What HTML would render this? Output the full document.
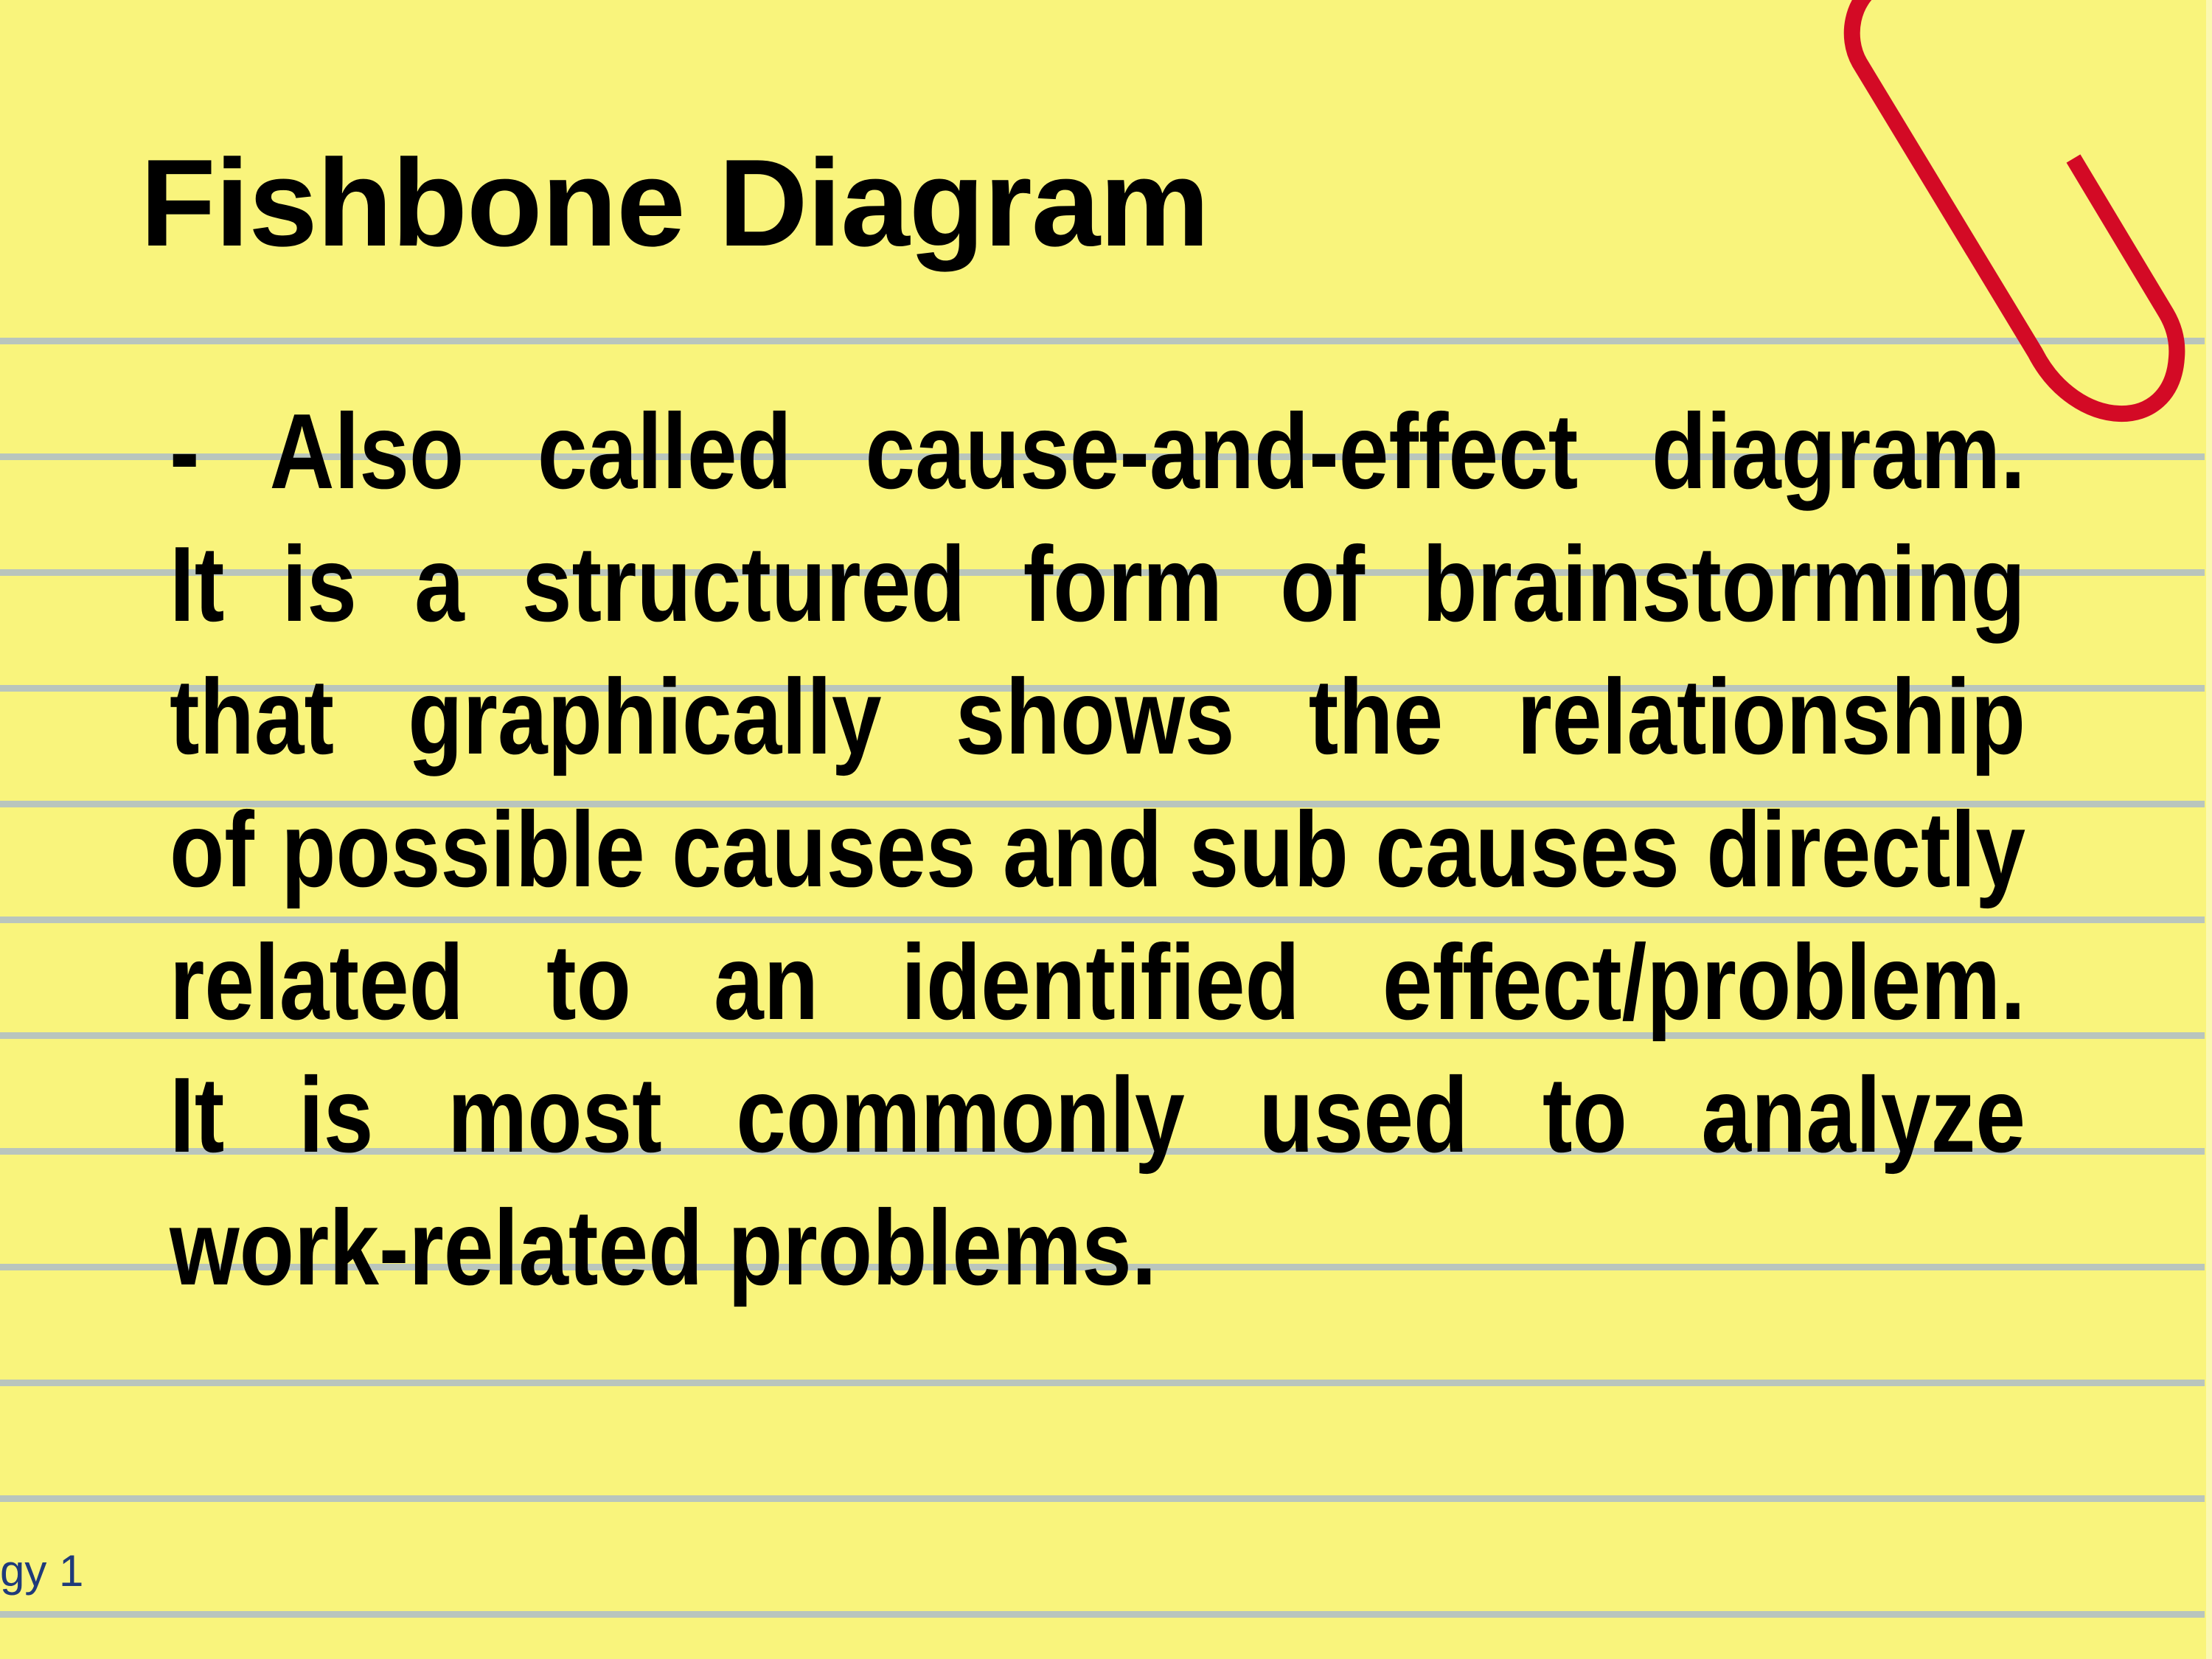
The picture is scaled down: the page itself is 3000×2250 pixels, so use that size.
<!DOCTYPE html>
<html><head><meta charset="utf-8"><style>
html,body{margin:0;padding:0}
body{width:3000px;height:2250px;overflow:hidden;position:relative;background:#f9f47c;font-family:"Liberation Sans",sans-serif}
.ln{position:absolute;left:0;width:2990px;height:9px;background:#b9c5bd}
.edge{position:absolute;right:0;top:0;width:8px;height:2250px;background:#fbf8b0}
h1{position:absolute;left:190px;top:175px;margin:0;font-size:168px;font-weight:bold;line-height:200px;letter-spacing:-1px;color:#000}
.body{position:absolute;left:230px;top:522px;width:3000px;transform:scaleX(0.839);transform-origin:0 0;font-size:145px;font-weight:bold;line-height:180px;color:#000}
.body div{text-align:justify;text-align-last:justify;white-space:nowrap}
.body div.last{text-align-last:left}
.ft{position:absolute;left:0;top:2098px;font-size:60px;color:#1f3a7a;line-height:66px}
</style></head><body>
<div class="ln" style="top:458px"></div>
<div class="ln" style="top:615px"></div>
<div class="ln" style="top:772px"></div>
<div class="ln" style="top:929px"></div>
<div class="ln" style="top:1086px"></div>
<div class="ln" style="top:1243px"></div>
<div class="ln" style="top:1400px"></div>
<div class="ln" style="top:1557px"></div>
<div class="ln" style="top:1714px"></div>
<div class="ln" style="top:1871px"></div>
<div class="ln" style="top:2028px"></div>
<div class="ln" style="top:2185px"></div>
<div class="edge"></div>
<h1>Fishbone Diagram</h1>
<div class="body">
<div>- Also called cause-and-effect diagram.</div>
<div>It is a structured form of brainstorming</div>
<div>that graphically shows the relationship</div>
<div>of possible causes and sub causes directly</div>
<div>related to an identified effect/problem.</div>
<div>It is most commonly used to analyze</div>
<div class="last">work-related problems.</div>
</div>
<div class="ft">gy 1</div>
<svg style="position:absolute;left:0;top:0" width="3000" height="2250">
<path d="M2545,-20 C2512,0 2502,50 2522,85 L2760,478 C2815,585 2945,590 2952,485 C2954,462 2948,442 2938,425 L2812,215" fill="none" stroke="#d30a25" stroke-width="22" stroke-linecap="butt"/>
</svg>
</body></html>
